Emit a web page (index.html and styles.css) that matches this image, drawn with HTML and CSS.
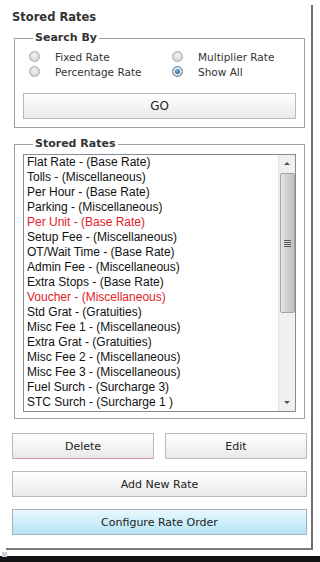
FILE: index.html
```html
<!DOCTYPE html>
<html lang="en">
<head>
    <meta charset="UTF-8">
    <meta name="viewport" content="width=device-width, initial-scale=1.0">
    <title>Stored Rates</title>
    <link rel="stylesheet" href="styles.css">
</head>
<body>
    <div class="panel">
        <h1>Stored Rates</h1>
        <fieldset class="search">
            <legend>Search By</legend>
            <div class="radios">
                <label class="opt"><span class="radio"></span>Fixed Rate</label>
                <label class="opt"><span class="radio"></span>Multiplier Rate</label>
                <label class="opt"><span class="radio"></span>Percentage Rate</label>
                <label class="opt"><span class="radio checked"></span>Show All</label>
            </div>
            <button class="btn go">GO</button>
        </fieldset>
        <fieldset class="stored">
            <legend>Stored Rates</legend>
            <div class="listbox">
                <ul class="items">
                    <li>Flat Rate - (Base Rate)</li>
                    <li>Tolls - (Miscellaneous)</li>
                    <li>Per Hour - (Base Rate)</li>
                    <li>Parking - (Miscellaneous)</li>
                    <li class="red">Per Unit - (Base Rate)</li>
                    <li>Setup Fee - (Miscellaneous)</li>
                    <li>OT/Wait Time - (Base Rate)</li>
                    <li>Admin Fee - (Miscellaneous)</li>
                    <li>Extra Stops - (Base Rate)</li>
                    <li class="red">Voucher - (Miscellaneous)</li>
                    <li>Std Grat - (Gratuities)</li>
                    <li>Misc Fee 1 - (Miscellaneous)</li>
                    <li>Extra Grat - (Gratuities)</li>
                    <li>Misc Fee 2 - (Miscellaneous)</li>
                    <li>Misc Fee 3 - (Miscellaneous)</li>
                    <li>Fuel Surch - (Surcharge 3)</li>
                    <li>STC Surch - (Surcharge 1 )</li>
                </ul>
                <div class="scrollbar">
                    <div class="arrow up"></div>
                    <div class="track">
                        <div class="thumb"><span class="grip"></span></div>
                    </div>
                    <div class="arrow down"></div>
                </div>
            </div>
        </fieldset>
        <div class="row">
            <button class="btn delete">Delete</button>
            <button class="btn">Edit</button>
        </div>
        <button class="btn wide">Add New Rate</button>
        <button class="btn wide blue">Configure Rate Order</button>
    </div>
    <div class="strip"><span class="nub"></span></div>
</body>
</html>
```

FILE: styles.css
```css
*{
    margin: 0;
    padding: 0;
    box-sizing: border-box;
}
body{
    width: 320px;
    height: 562px;
    background: #fff;
    font-family: "DejaVu Sans", Verdana, sans-serif;
    font-size: 10.5px;
    color: #222;
    display: flex;
    flex-direction: column;
}
.panel{
    margin: 5px 0 0 6px;
    width: 307px;
    height: 545px;
    border-right: 2px solid #6e6e6e;
    border-bottom: 2px solid #7a7a7a;
    padding: 4px 4px 0 6px;
    display: flex;
    flex-direction: column;
}
h1{
    font-size: 11.5px;
    font-weight: bold;
    color: #333;
    line-height: 16px;
    margin-bottom: 6px;
}
fieldset{
    border: 1px solid #a0a0a0;
    margin: 0 2px;
    padding: 0 8px 8px 8px;
}
legend{
    font-weight: bold;
    font-size: 11px;
    color: #333;
    padding: 0 2px;
    margin-left: 10px;
    line-height: 14px;
}
.radios{
    display: grid;
    grid-template-columns: 143px 1fr;
    row-gap: 0;
    padding-left: 6px;
    margin-top: 4px;
}
.opt{
    display: flex;
    align-items: center;
    height: 15px;
    color: #333;
}
.radio{
    width: 11px;
    height: 11px;
    border-radius: 50%;
    border: 1px solid #a8a8a8;
    background: radial-gradient(circle at 50% 40%, #f4f4f4 0%, #d6d6d6 70%, #c4c4c4 100%);
    margin-right: 15px;
    display: flex;
    align-items: center;
    justify-content: center;
}
.radio.checked{
    border-color: #5a7a95;
}
.radio.checked::after{
    content: "";
    width: 5px;
    height: 5px;
    border-radius: 50%;
    background: radial-gradient(circle at 40% 35%, #6fb3e6, #1a5a90);
}
.btn{
    font-family: "DejaVu Sans", Verdana, sans-serif;
    font-size: 11px;
    color: #222;
    height: 26px;
    border: 1px solid #b8b8b8;
    background: linear-gradient(#ffffff, #f2f2f2 60%, #e8e8e8);
    display: flex;
    align-items: center;
    justify-content: center;
}
.go{
    width: 100%;
    margin-top: 14px;
    font-size: 12px;
}
.stored{
    margin-top: 9px;
    padding-bottom: 6px;
}
.listbox{
    margin-top: 3px;
    border: 1px solid #848b94;
    display: flex;
    height: 258px;
}
.items{
    list-style: none;
    flex: 1;
    font-family: "Liberation Sans", Arial, sans-serif;
    font-size: 12px;
    color: #111;
    padding-left: 3px;
}
.items li{
    line-height: 15px;
    height: 15px;
    white-space: nowrap;
}
.items .red{
    color: #e0202a;
}
.scrollbar{
    width: 17px;
    background: #f0f0f0;
    border-left: 1px solid #e4e4e4;
    display: flex;
    flex-direction: column;
}
.arrow{
    height: 17px;
    display: flex;
    align-items: center;
    justify-content: center;
}
.arrow::after{
    content: "";
    border-left: 3px solid transparent;
    border-right: 3px solid transparent;
}
.arrow.up::after{
    border-bottom: 3px solid #555;
}
.arrow.down::after{
    border-top: 3px solid #555;
}
.track{
    flex: 1;
}
.thumb{
    height: 140px;
    margin: 1px 0 0 1px;
    width: 15px;
    border: 1px solid #a2a2a2;
    border-radius: 2px;
    background: linear-gradient(to right, #e6e6e6, #d2d2d2 40%, #c2c2c2);
    display: flex;
    align-items: center;
    justify-content: center;
}
.grip{
    width: 7px;
    height: 7px;
    background: repeating-linear-gradient(#5a5a5a 0 1px, transparent 1px 2px);
}
.row{
    display: flex;
    justify-content: space-between;
    margin-top: 14px;
}
.row .btn{
    width: 142px;
}
.delete{
    border-bottom-color: #d89aa2;
}
.wide{
    width: 295px;
    margin-top: 12px;
}
.blue{
    border-color: #9fb4bd;
    background: linear-gradient(#eaf8fd, #cdeef9 50%, #b6e3f4);
}
.strip{
    margin-top: 6px;
    height: 6px;
    background: #141414;
    position: relative;
}
.nub{
    position: absolute;
    left: 2px;
    top: -4px;
    width: 5px;
    height: 5px;
    background: #c8d0dc;
}
```
